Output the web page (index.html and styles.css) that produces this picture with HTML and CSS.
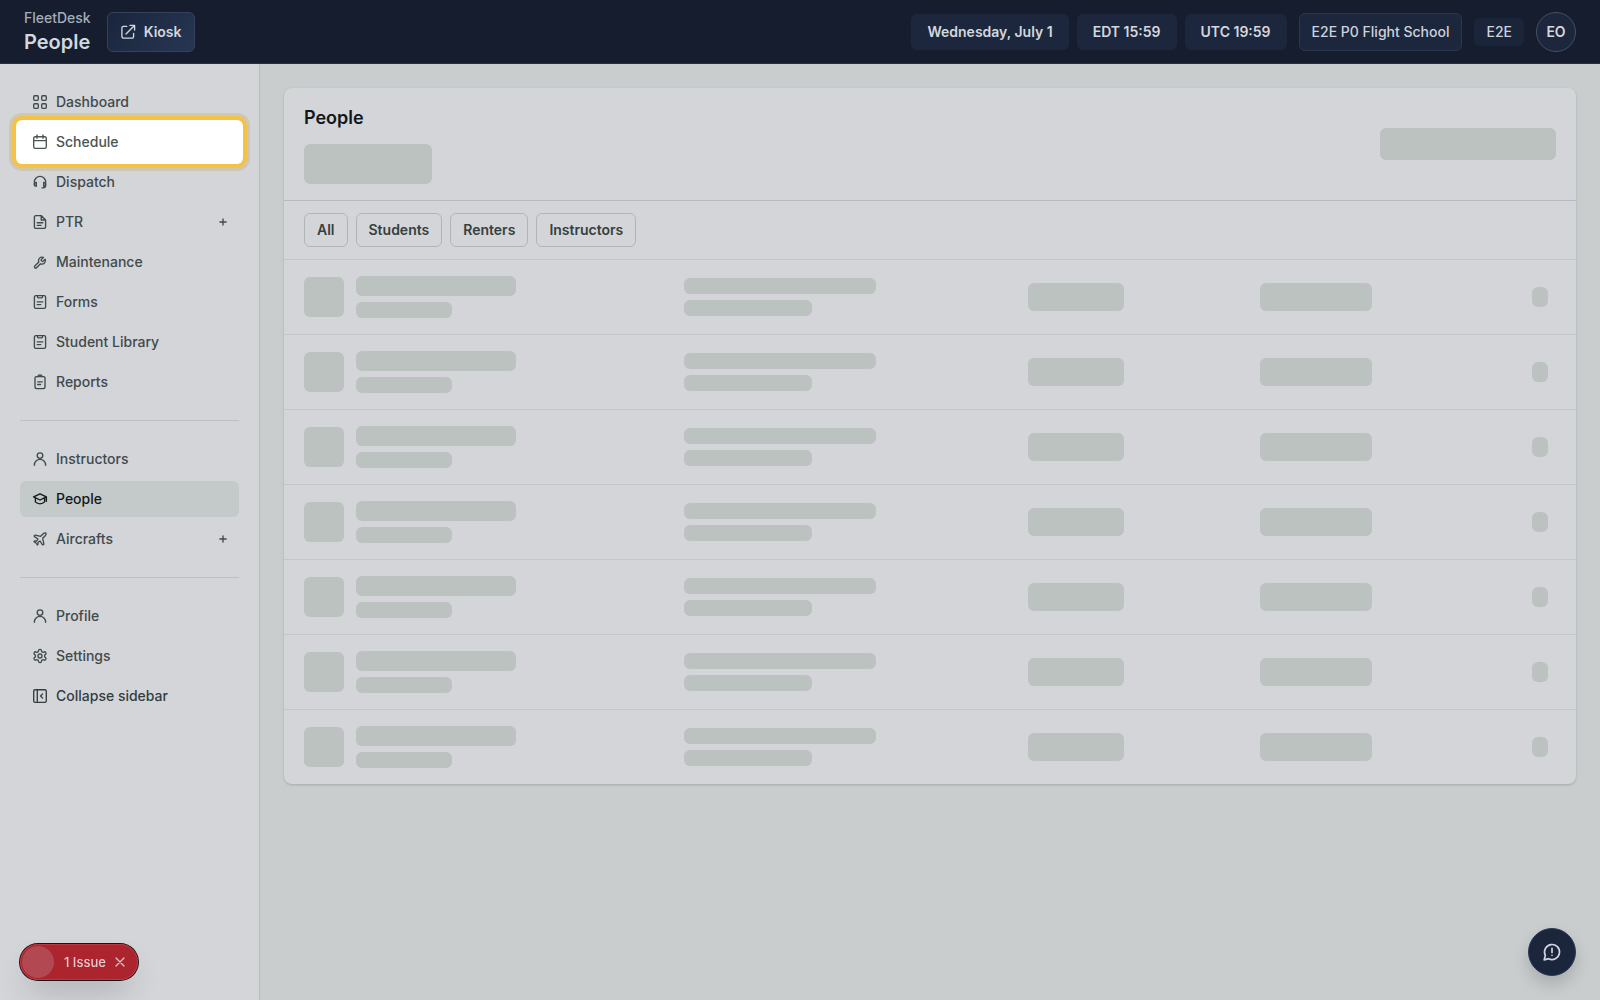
FILE: index.html
```html
<!DOCTYPE html>
<html lang="en">
<head>
<meta charset="utf-8">
<meta name="viewport" content="width=device-width, initial-scale=1">
<title>People - FleetDesk</title>
<link rel="stylesheet" href="styles.css">
</head>
<body>
<svg class="sprite" aria-hidden="true">
  <symbol id="i-user" viewBox="0 0 16 16"><circle cx="8" cy="4.6" r="2.8"/><path d="M2.4 14.3V14a5.6 5.6 0 0 1 11.2 0v.3"/></symbol>
  <symbol id="i-form" viewBox="0 0 16 16"><rect x="2.4" y="1.6" width="11.2" height="12.8" rx="1.4"/><path d="M5.500 1.800v1.300c0 .4.3.7.7.7h3.600c.4 0 .7-.3.700-.7V1.800M5.200 7.800h5.600M5.200 10.600h3.600"/></symbol>
  <symbol id="i-plus" viewBox="0 0 16 16"><path d="M8 4.900v6.200M4.900 8h6.200"/></symbol>
</svg>

<header class="topbar">
  <div class="brand">
    <span class="brand-name">FleetDesk</span>
    <h1 class="brand-page">People</h1>
  </div>
  <button class="kiosk" type="button">
    <svg class="icon" viewBox="0 0 16 16"><path d="M6.7 2.4H3.4a1.5 1.5 0 0 0-1.5 1.5v8.7a1.5 1.5 0 0 0 1.5 1.5h8.7a1.5 1.5 0 0 0 1.5-1.5V9.3M10 1.4h4.6V6M14.2 1.8 6 10"/></svg>
    Kiosk
  </button>
  <div class="status">
    <div class="clocks">
      <span class="clock">Wednesday, July 1</span>
      <span class="clock">EDT 15:59</span>
      <span class="clock">UTC 19:59</span>
    </div>
    <button class="school" type="button">E2E P0 Flight School</button>
    <span class="tag">E2E</span>
    <button class="avatar" type="button">EO</button>
  </div>
</header>

<div class="shell">
  <nav class="sidebar" aria-label="Main">
    <div class="nav-group">
      <a class="nav-item" href="#"><svg class="icon" viewBox="0 0 16 16"><rect x="1.7" y="1.7" width="4.6" height="4.6" rx="1"/><rect x="9.7" y="1.7" width="4.6" height="4.6" rx="1"/><rect x="1.7" y="9.7" width="4.6" height="4.6" rx="1"/><rect x="9.7" y="9.7" width="4.6" height="4.6" rx="1"/></svg>Dashboard</a>
      <a class="nav-item spotlight" href="#"><svg class="icon" viewBox="0 0 16 16"><rect x="1.7" y="2.7" width="12.6" height="11.6" rx="1.6"/><path d="M1.7 6.6h12.6M5 .8v3.4M11 .8v3.4"/></svg>Schedule</a>
      <a class="nav-item" href="#"><svg class="icon" viewBox="0 0 16 16"><path d="M2.4 11V7.9a5.6 5.6 0 0 1 11.200 0v3.600c0 1.500-.9 2.300-2.200 2.300h-1.400"/><path d="M4.300 8.400v3.900c-1.200 0-1.900-.8-1.900-2s.7-1.900 1.900-1.900zM11.700 8.400v3.900c1.200 0 1.900-.8 1.900-2s-.7-1.900-1.900-1.900z"/></svg>Dispatch</a>
      <a class="nav-item" href="#"><svg class="icon" viewBox="0 0 16 16"><path d="M9.200 1.600H3.900a1.500 1.500 0 0 0-1.500 1.500v9.800a1.500 1.500 0 0 0 1.500 1.500h8.200a1.500 1.500 0 0 0 1.500-1.500V6zM9.200 1.600V6h4.400M5.200 8.700h5.600M5.200 11.300h3.900"/></svg>PTR<svg class="icon nav-plus"><use href="#i-plus"/></svg></a>
      <a class="nav-item" href="#"><svg class="icon icon-wrench" viewBox="-1.2 -3.4 27.6 27.6"><path d="M14.7 6.3a1 1 0 0 0 0 1.4l1.6 1.6a1 1 0 0 0 1.4 0l3.77-3.77a6 6 0 0 1-7.94 7.94l-6.91 6.91a2.12 2.12 0 0 1-3-3l6.91-6.91a6 6 0 0 1 7.94-7.94l-3.76 3.76z"/></svg>Maintenance</a>
      <a class="nav-item" href="#"><svg class="icon"><use href="#i-form"/></svg>Forms</a>
      <a class="nav-item" href="#"><svg class="icon"><use href="#i-form"/></svg>Student Library</a>
      <a class="nav-item" href="#"><svg class="icon" viewBox="0 0 16 16"><rect x="3" y="2.6" width="10" height="12" rx="1.5"/><path d="M5.700 2.600c.3-1 1.200-1.600 2.300-1.600s2 .6 2.300 1.600M5.700 7.800h4.600M5.700 10.500h2.900"/></svg>Reports</a>
    </div>
    <div class="nav-group">
      <a class="nav-item" href="#"><svg class="icon"><use href="#i-user"/></svg>Instructors</a>
      <a class="nav-item active" href="#" aria-current="page"><svg class="icon" viewBox="0 0 16 16"><path d="M8 2.800 1.600 5.900 8 9l6.400-3.100zM3.400 7v3.900C4.500 12.100 6.100 12.800 8 12.800s3.500-.7 4.600-1.900V7M14.400 6v4.200"/></svg>People</a>
      <a class="nav-item" href="#"><svg class="icon icon-24" viewBox="0 0 24 24"><path d="M17.8 19.2 16 11l3.5-3.5C21 6 21.5 4 21 3c-1-.5-3 0-4.5 1.5L13 8 4.8 6.2c-.5-.1-.9.1-1.1.5l-.3.5c-.2.5-.1 1 .3 1.3L9 12l-2 3H4l-1 1 3 2 2 3 1-1v-3l3-2 3.5 5.3c.3.4.8.5 1.3.3l.5-.2c.4-.3.6-.7.5-1.2z"/></svg>Aircrafts<svg class="icon nav-plus"><use href="#i-plus"/></svg></a>
    </div>
    <div class="nav-group">
      <a class="nav-item" href="#"><svg class="icon"><use href="#i-user"/></svg>Profile</a>
      <a class="nav-item" href="#"><svg class="icon icon-24" viewBox="0 0 24 24"><path d="M12.22 2h-.44a2 2 0 0 0-2 2v.18a2 2 0 0 1-1 1.73l-.43.25a2 2 0 0 1-2 0l-.15-.08a2 2 0 0 0-2.73.73l-.22.38a2 2 0 0 0 .73 2.73l.15.1a2 2 0 0 1 1 1.72v.51a2 2 0 0 1-1 1.74l-.15.09a2 2 0 0 0-.73 2.73l.22.38a2 2 0 0 0 2.73.73l.15-.08a2 2 0 0 1 2 0l.43.25a2 2 0 0 1 1 1.73V20a2 2 0 0 0 2 2h.44a2 2 0 0 0 2-2v-.18a2 2 0 0 1 1-1.73l.43-.25a2 2 0 0 1 2 0l.15.08a2 2 0 0 0 2.73-.73l.22-.39a2 2 0 0 0-.73-2.73l-.15-.08a2 2 0 0 1-1-1.74v-.5a2 2 0 0 1 1-1.74l.15-.09a2 2 0 0 0 .73-2.73l-.22-.38a2 2 0 0 0-2.73-.73l-.15.08a2 2 0 0 1-2 0l-.43-.25a2 2 0 0 1-1-1.73V4a2 2 0 0 0-2-2z"/><circle cx="12" cy="12" r="3"/></svg>Settings</a>
      <button class="nav-item collapse" type="button"><svg class="icon" viewBox="0 0 16 16"><rect x="1.7" y="1.7" width="12.6" height="12.6" rx="1.4"/><path d="M5.300 1.700v12.600M10.600 5.900 8.600 8l2 2.100"/></svg>Collapse sidebar</button>
    </div>
  </nav>

  <main class="content">
    <section class="card">
      <div class="card-head">
        <div class="card-title">
          <h2>People</h2>
          <div class="skel skel-count"></div>
        </div>
        <div class="skel skel-action"></div>
      </div>
      <div class="filters">
        <button type="button">All</button>
        <button type="button">Students</button>
        <button type="button">Renters</button>
        <button type="button">Instructors</button>
      </div>
      <div class="rows" aria-busy="true">
        <div class="row"><div class="person"><i class="skel face"></i><div class="lines"><i class="skel name"></i><i class="skel role"></i></div></div><div class="lines"><i class="skel mail"></i><i class="skel phone"></i></div><i class="skel pill"></i><i class="skel pill wide"></i><i class="skel more"></i></div>
        <div class="row"><div class="person"><i class="skel face"></i><div class="lines"><i class="skel name"></i><i class="skel role"></i></div></div><div class="lines"><i class="skel mail"></i><i class="skel phone"></i></div><i class="skel pill"></i><i class="skel pill wide"></i><i class="skel more"></i></div>
        <div class="row"><div class="person"><i class="skel face"></i><div class="lines"><i class="skel name"></i><i class="skel role"></i></div></div><div class="lines"><i class="skel mail"></i><i class="skel phone"></i></div><i class="skel pill"></i><i class="skel pill wide"></i><i class="skel more"></i></div>
        <div class="row"><div class="person"><i class="skel face"></i><div class="lines"><i class="skel name"></i><i class="skel role"></i></div></div><div class="lines"><i class="skel mail"></i><i class="skel phone"></i></div><i class="skel pill"></i><i class="skel pill wide"></i><i class="skel more"></i></div>
        <div class="row"><div class="person"><i class="skel face"></i><div class="lines"><i class="skel name"></i><i class="skel role"></i></div></div><div class="lines"><i class="skel mail"></i><i class="skel phone"></i></div><i class="skel pill"></i><i class="skel pill wide"></i><i class="skel more"></i></div>
        <div class="row"><div class="person"><i class="skel face"></i><div class="lines"><i class="skel name"></i><i class="skel role"></i></div></div><div class="lines"><i class="skel mail"></i><i class="skel phone"></i></div><i class="skel pill"></i><i class="skel pill wide"></i><i class="skel more"></i></div>
        <div class="row"><div class="person"><i class="skel face"></i><div class="lines"><i class="skel name"></i><i class="skel role"></i></div></div><div class="lines"><i class="skel mail"></i><i class="skel phone"></i></div><i class="skel pill"></i><i class="skel pill wide"></i><i class="skel more"></i></div>
      </div>
    </section>
  </main>
</div>

<div class="issues">
  <span class="issues-mark"></span>
  <button class="issues-open" type="button">1 Issue</button>
  <button class="issues-close" type="button" aria-label="Dismiss"><svg viewBox="0 0 12 12"><path d="M2 2l8 8M10 2l-8 8"/></svg></button>
</div>

<button class="feedback" type="button" aria-label="Send feedback">
  <svg viewBox="0 0 24 24"><path d="M7.9 20A9 9 0 1 0 4 16.1L2.600 21.400zM12 7.500v5M12 16h.01"/></svg>
</button>
</body>
</html>
```
FILE: styles.css
```css
* { box-sizing: border-box; }

body {
  margin: 0;
  min-height: 100vh;
  display: flex;
  flex-direction: column;
  background: #c9cdce;
  color: #414a4b;
  font: 500 14px/20px Inter, "Liberation Sans", sans-serif;
}

button { font: inherit; color: inherit; margin: 0; cursor: pointer; }
h1, h2 { margin: 0; }

.sprite { position: absolute; width: 0; height: 0; }

.icon {
  width: 16px;
  height: 16px;
  flex: none;
  fill: none;
  stroke: currentColor;
  stroke-width: 1.35;
  stroke-linecap: round;
  stroke-linejoin: round;
}
.icon-24 { stroke-width: 2; }
.icon-wrench { stroke-width: 2.3; }

/* Top bar */
.topbar {
  display: flex;
  align-items: center;
  gap: 16px;
  height: 64px;
  padding: 0 24px;
  background: #151d2f;
  border-bottom: 1px solid #263041;
  color: #d3d7de;
}
.brand { display: flex; flex-direction: column; }
.brand-name { color: #a5adba; }
.brand-page { font-size: 20px; line-height: 28px; font-weight: 600; }
.kiosk {
  display: flex;
  align-items: center;
  gap: 8px;
  height: 40px;
  padding: 0 12px;
  border: 1px solid #35425a;
  border-radius: 6px;
  background: linear-gradient(135deg, #1a253c, #263653);
  font-weight: 600;
}
.status { display: flex; align-items: center; gap: 12px; margin-left: auto; }
.clocks { display: flex; gap: 8px; }
.clock {
  padding: 8px 16px;
  border-radius: 6px;
  background: #1c273d;
  font-weight: 600;
}
.school {
  height: 38px;
  padding: 0 12px;
  border: 1px solid #2b374c;
  border-radius: 6px;
  background: #1c273d;
  color: #cdd2da;
}
.tag {
  padding: 4px 12px;
  border-radius: 6px;
  background: #1a253a;
  color: #cdd2da;
}
.avatar {
  width: 40px;
  height: 40px;
  padding: 0;
  border: 1px solid #475164;
  border-radius: 50%;
  background: #1c273d;
  font-weight: 600;
}

/* Shell */
.shell { display: flex; flex: 1; }
.sidebar {
  flex: none;
  width: 260px;
  padding: 20px;
  border-right: 1px solid #b7bcbf;
  background: #d3d5d9;
}
.nav-group { display: flex; flex-direction: column; gap: 4px; }
.nav-group + .nav-group {
  margin-top: 20px;
  padding-top: 20px;
  border-top: 1px solid #bcc0c3;
}
.nav-item {
  display: flex;
  align-items: center;
  gap: 8px;
  height: 36px;
  padding: 0 8px 0 12px;
  border: 0;
  border-radius: 6px;
  background: none;
  color: #414a4b;
  text-align: left;
  text-decoration: none;
}
.nav-plus { margin-left: auto; }
.active { background: #c4caca; color: #12191b; }
.collapse { color: #343e3f; }

.spotlight { position: relative; isolation: isolate; color: #4a5554; }
.spotlight::before {
  content: "";
  position: absolute;
  inset: -4px;
  z-index: -1;
  border-radius: 6px;
  background: #fff;
  box-shadow: 0 0 0 4px #f3c246, 0 0 0 7px rgba(205, 178, 120, 0.4);
}

/* People card */
.content { flex: 1; min-width: 0; padding: 24px; }
.card {
  overflow: hidden;
  border-radius: 8px;
  background: #d4d5d9;
  box-shadow: 0 1px 3px rgba(0, 0, 0, 0.12), 0 1px 2px rgba(0, 0, 0, 0.06);
}
.card-head {
  display: flex;
  align-items: center;
  justify-content: space-between;
  padding: 16px 20px;
  border-bottom: 1px solid #b6b9bd;
}
.card-title { display: flex; flex-direction: column; gap: 12px; }
.card-title h2 { font-size: 18px; line-height: 28px; font-weight: 600; color: #12171a; }

.filters {
  display: flex;
  gap: 8px;
  padding: 12px 20px;
  border-bottom: 1px solid #c4c6ca;
}
.filters button {
  height: 34px;
  padding: 0 12px;
  border: 1px solid #b1b5b8;
  border-radius: 6px;
  background: none;
  color: #35403e;
  font-weight: 600;
}

.skel { display: block; border-radius: 6px; background: #bbc2c0; }
.skel-count { width: 128px; height: 40px; }
.skel-action { width: 176px; height: 32px; }

.row {
  display: grid;
  grid-template-columns: 95fr 86fr 58fr 67fr 12fr;
  align-items: center;
  padding: 16px 0 16px 20px;
}
.row + .row { border-top: 1px solid #c4c6ca; }
.person { display: flex; align-items: center; gap: 12px; }
.lines { display: flex; flex-direction: column; gap: 6px; }
.face { width: 40px; height: 40px; }
.name { width: 160px; height: 20px; }
.role { width: 96px; height: 16px; }
.mail { width: 192px; height: 16px; }
.phone { width: 128px; height: 16px; }
.pill { width: 96px; height: 28px; }
.wide { width: 112px; }
.more { width: 16px; height: 20px; justify-self: end; margin-right: 28px; }

/* Floating controls */
.issues {
  position: fixed;
  left: 20px;
  bottom: 20px;
  display: flex;
  align-items: center;
  height: 36px;
  padding: 0 12px 0 2px;
  border-radius: 18px;
  background: #ab242e;
  color: #e6c9cc;
  font-size: 13px;
  box-shadow: inset 0 0 0 1px #b93a43, 0 0 0 1px #1c1215, 0 16px 32px -8px rgba(0, 0, 0, 0.24);
}
.issues-mark {
  width: 32px;
  height: 32px;
  margin-right: 10px;
  border-radius: 50%;
  background: #b24851;
}
.issues-open, .issues-close { padding: 0; border: 0; background: none; }
.issues-close { display: flex; margin-left: 8px; }
.issues-close svg { width: 12px; height: 12px; fill: none; stroke: currentColor; stroke-width: 1.2; stroke-linecap: round; }

.feedback {
  position: fixed;
  right: 24px;
  bottom: 24px;
  display: grid;
  place-items: center;
  width: 48px;
  height: 48px;
  padding: 0;
  border: 1px solid #2b3a55;
  border-radius: 50%;
  background: #1b263c;
  color: #d0d6df;
  box-shadow: 0 8px 16px rgba(0, 0, 0, 0.16);
}
.feedback svg {
  width: 20px;
  height: 20px;
  fill: none;
  stroke: currentColor;
  stroke-width: 2;
  stroke-linecap: round;
  stroke-linejoin: round;
}
```
